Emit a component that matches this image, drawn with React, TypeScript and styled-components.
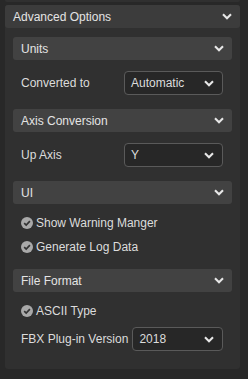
import React from "react";
import styled, { createGlobalStyle } from "styled-components";

const GlobalStyle = createGlobalStyle`
  html, body {
    margin: 0;
    padding: 0;
    background: #282828;
    font-family: "Liberation Sans", Arial, sans-serif;
    font-size: 12px;
    color: #dcdcdc;
  }
`;

const Page = styled.div`
  width: 248px;
  height: 379px;
  padding: 0 8px 0 5px;
  box-sizing: border-box;
  display: flex;
  flex-direction: column;
  gap: 3px;
`;

const PrevPanel = styled.div`
  height: 2px;
  background: #303030;
  border-radius: 0 0 3px 3px;
`;

const Panel = styled.div`
  background: #303030;
  border-radius: 3px;
  display: flex;
  flex-direction: column;
`;

const Header = styled.div<{ $sub?: boolean }>`
  height: 23px;
  display: flex;
  align-items: center;
  justify-content: space-between;
  padding: 0 8px;
  background: ${(p) => (p.$sub ? "#424242" : "#3c3c3c")};
  border-radius: 3px;
  color: #e4e4e4;
  font-size: 12px;
`;

const Body = styled.div`
  padding: 9px 8px 4px;
  display: flex;
  flex-direction: column;
`;

const Content = styled.div`
  padding: 9px 9px 12px 8px;
  display: flex;
  flex-direction: column;
  gap: 4px;
`;

const Row = styled.div`
  height: 28px;
  display: flex;
  align-items: center;
`;

const Label = styled.span`
  min-width: 99px;
  margin-right: 4px;
  white-space: nowrap;
`;

const Select = styled.div`
  flex: 1;
  height: 24px;
  box-sizing: border-box;
  border: 1px solid #5a5a5a;
  border-radius: 4px;
  background: #272727;
  display: flex;
  align-items: center;
  justify-content: space-between;
  padding: 0 8px 0 6px;
  color: #dcdcdc;
`;

const CheckRow = styled.div`
  height: 20px;
  display: flex;
  align-items: center;
  gap: 3px;
`;

function Chevron() {
  return (
    <svg width="10" height="7" viewBox="0 0 10 7">
      <path d="M1 1.3 L5 5.2 L9 1.3" fill="none" stroke="#e8e8e8" strokeWidth="2.1" />
    </svg>
  );
}

function CheckIcon() {
  return (
    <svg width="12" height="12" viewBox="0 0 12 12">
      <circle cx="6" cy="6" r="6" fill="#a9a9a9" />
      <path d="M3.2 6.1 L5.2 8 L8.9 4.2" fill="none" stroke="#333" strokeWidth="1.7" />
    </svg>
  );
}

function Section({ title, children }: any) {
  return (
    <>
      <Header $sub>
        <span>{title}</span>
        <Chevron />
      </Header>
      <Content>{children}</Content>
    </>
  );
}

function SelectRow({ label, value }: any) {
  return (
    <Row>
      <Label>{label}</Label>
      <Select>
        <span>{value}</span>
        <Chevron />
      </Select>
    </Row>
  );
}

function Check({ label }: any) {
  return (
    <CheckRow>
      <CheckIcon />
      <span>{label}</span>
    </CheckRow>
  );
}

export default function App() {
  return (
    <>
      <GlobalStyle />
      <Page>
        <PrevPanel />
        <Panel>
          <Header>
            <span>Advanced Options</span>
            <Chevron />
          </Header>
          <Body>
            <Section title="Units">
              <SelectRow label="Converted to" value="Automatic" />
            </Section>
            <Section title="Axis Conversion">
              <SelectRow label="Up Axis" value="Y" />
            </Section>
            <Section title="UI">
              <Check label="Show Warning Manger" />
              <Check label="Generate Log Data" />
            </Section>
            <Section title="File Format">
              <Check label="ASCII Type" />
              <SelectRow label="FBX Plug-in Version" value="2018" />
            </Section>
          </Body>
        </Panel>
      </Page>
    </>
  );
}
